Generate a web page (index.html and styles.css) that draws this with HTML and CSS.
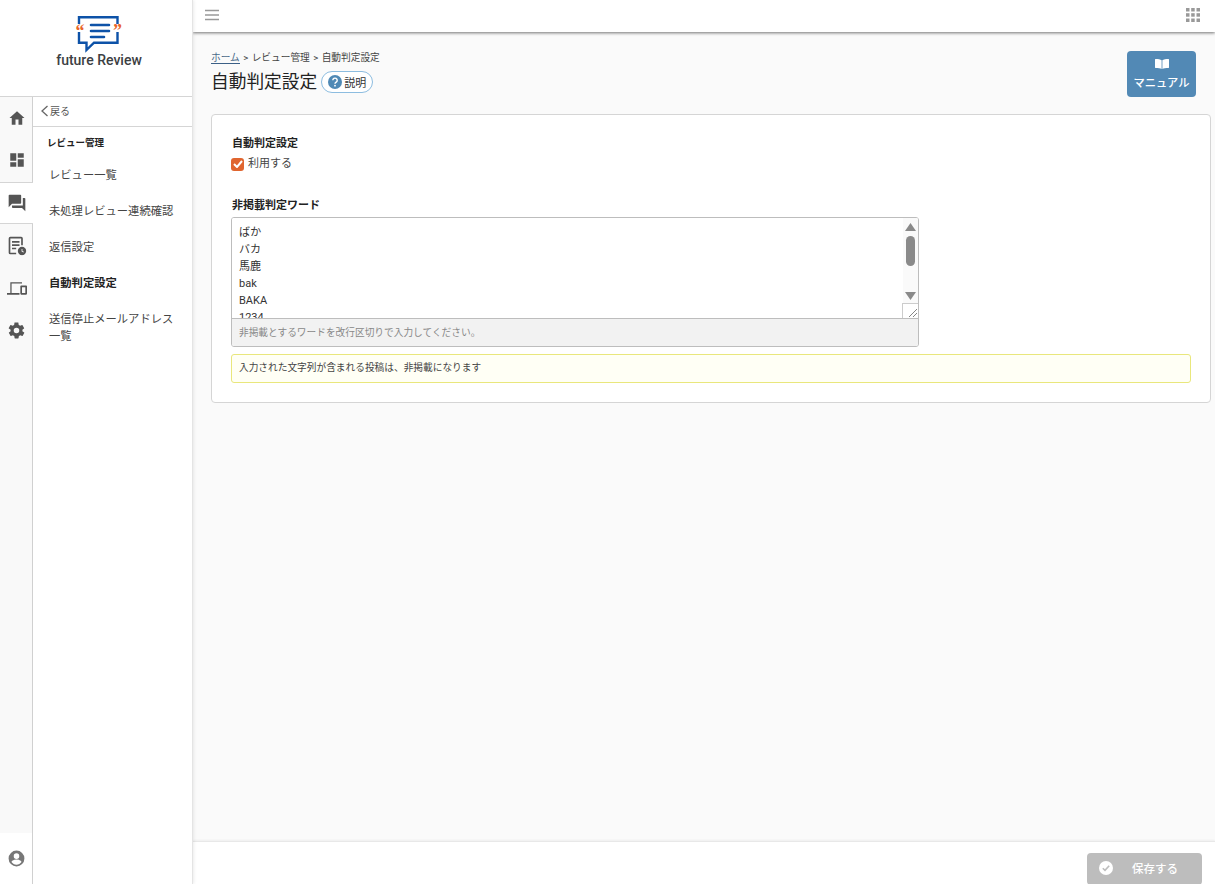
FILE: index.html
```html
<!DOCTYPE html>
<html lang="ja">
<head>
    <meta charset="UTF-8">
    <meta name="viewport" content="width=device-width, initial-scale=1.0">
    <title>自動判定設定</title>
    <link rel="stylesheet" href="styles.css">
</head>
<body>
    <div class="layout">
        <aside class="sidebar">
            <div class="logo">
                <svg class="logo-mark" width="46" height="38" viewBox="0 0 46 38">
                    <path d="M3 9V2.300H41.500V9M41.500 17V27.700H18L10.500 35V27.700H3V17" fill="none" stroke="#0d52a8" stroke-width="2.400"/>
                    <path d="M15 10h18M15 16h18M15 22h13" fill="none" stroke="#0d52a8" stroke-width="2.600" stroke-linecap="round"/>
                    <text x="-0.500" y="22" class="logo-quote">“</text>
                    <text x="37" y="22" class="logo-quote">”</text>
                </svg>
                <div class="logo-text">future Review</div>
            </div>
            <div class="side-body">
                <nav class="rail">
                    <a class="rail-item">
                        <svg width="18" height="18" viewBox="0 0 24 24"><path d="M10 21v-7h4v7h5v-9h3L12 3 2 12h3v9z"/></svg>
                    </a>
                    <a class="rail-item">
                        <svg width="18" height="18" viewBox="0 0 24 24"><path d="M3 13h8V3H3zm0 8h8v-6H3zm10 0h8V11h-8zm0-18v6h8V3z"/></svg>
                    </a>
                    <a class="rail-item active">
                        <svg width="20" height="20" viewBox="0 0 24 24"><path d="M21 6h-2v9H6v2c0 .6.4 1 1 1h11l4 4V7c0-.6-.4-1-1-1zm-4 6V3c0-.6-.4-1-1-1H3c-.6 0-1 .4-1 1v14l4-4h10c.6 0 1-.4 1-1z"/></svg>
                    </a>
                    <a class="rail-item">
                        <svg width="20" height="20" viewBox="0 0 24 24"><path d="M4 1h13a2 2 0 0 1 2 2v8h-2V3H4v17h7v2H4a2 2 0 0 1-2-2V3a2 2 0 0 1 2-2z"/><path d="M6 6h9v2H6zm0 4h9v2H6zm0 4h5v2H6z"/><circle cx="18" cy="18" r="5"/><path d="M17.500 15.500h1v2.500l1.800 1-.5.8-2.300-1.300z" fill="#f9f9f9"/></svg>
                    </a>
                    <a class="rail-item">
                        <svg width="20" height="20" viewBox="0 0 24 24"><path d="M4 5h14v1.500H5.500V18H15v2H0v-2h4z"/><path d="M17 9h6a1 1 0 0 1 1 1v9a1 1 0 0 1-1 1h-6a1 1 0 0 1-1-1v-9a1 1 0 0 1 1-1zm1 2v7h4v-7z"/></svg>
                    </a>
                    <a class="rail-item">
                        <svg width="19" height="19" viewBox="0 0 24 24"><path d="M19.400 13c.1-.3.100-.7.100-1s0-.7-.1-1l2.100-1.600c.2-.2.200-.4.100-.6l-2-3.500c-.1-.2-.4-.3-.6-.2l-2.500 1c-.5-.4-1.100-.7-1.700-1l-.4-2.600c0-.3-.2-.5-.5-.5h-4c-.2 0-.5.200-.5.500l-.4 2.600c-.6.200-1.100.6-1.700 1l-2.500-1c-.2-.1-.5 0-.6.200l-2 3.500c-.1.200-.1.500.1.600L4.600 11c0 .3-.1.700-.1 1s0 .7.100 1l-2.100 1.600c-.2.200-.2.400-.1.600l2 3.500c.1.200.4.300.6.200l2.500-1c.5.400 1.100.7 1.700 1l.4 2.600c0 .3.200.5.500.5h4c.2 0 .5-.2.5-.5l.4-2.600c.6-.2 1.200-.6 1.700-1l2.500 1c.2.100.5 0 .6-.2l2-3.500c.1-.2.100-.5-.1-.6zM12 15.500a3.500 3.500 0 1 1 0-7 3.500 3.500 0 0 1 0 7z"/></svg>
                    </a>
                    <div class="rail-user">
                        <svg width="19" height="19" viewBox="0 0 24 24"><path d="M12 2a10 10 0 1 0 0 20 10 10 0 0 0 0-20zm0 3.500a3.500 3.500 0 1 1 0 7 3.500 3.500 0 0 1 0-7zm0 14.300c-2.600 0-4.900-1.300-6.300-3.300.1-2 4.200-3.100 6.300-3.100s6.200 1.100 6.300 3.100c-1.400 2-3.700 3.300-6.300 3.300z"/></svg>
                    </div>
                </nav>
                <div class="submenu">
                    <a class="back">
                        <svg width="9" height="12" viewBox="0 0 9 12"><path d="M7.500 1 2 6l5.500 5" fill="none" stroke="#666" stroke-width="1.300"/></svg>
                        戻る
                    </a>
                    <div class="sub-title">レビュー管理</div>
                    <a class="sub-item">レビュー一覧</a>
                    <a class="sub-item">未処理レビュー連続確認</a>
                    <a class="sub-item">返信設定</a>
                    <a class="sub-item current">自動判定設定</a>
                    <a class="sub-item">送信停止メールアドレス一覧</a>
                </div>
            </div>
        </aside>

        <div class="main">
            <header class="topbar">
                <svg width="14" height="12" viewBox="0 0 14 12"><path d="M0 1.500h14M0 6h14M0 10.500h14" stroke="#999" stroke-width="1.500"/></svg>
                <svg width="14" height="14" viewBox="0 0 14 14" fill="#999">
                    <rect x="0" y="0" width="3.500" height="3.500"/><rect x="5.200" y="0" width="3.500" height="3.500"/><rect x="10.500" y="0" width="3.500" height="3.500"/>
                    <rect x="0" y="5.200" width="3.500" height="3.500"/><rect x="5.200" y="5.200" width="3.500" height="3.500"/><rect x="10.500" y="5.200" width="3.500" height="3.500"/>
                    <rect x="0" y="10.500" width="3.500" height="3.500"/><rect x="5.200" y="10.500" width="3.500" height="3.500"/><rect x="10.500" y="10.500" width="3.500" height="3.500"/>
                </svg>
            </header>

            <main class="content">
                <div class="page-head">
                    <div>
                        <div class="breadcrumb"><a>ホーム</a> &gt; レビュー管理 &gt; 自動判定設定</div>
                        <div class="title-row">
                            <h1>自動判定設定</h1>
                            <span class="help-pill">
                                <svg width="14" height="14" viewBox="0 0 14 14"><circle cx="7" cy="7" r="7" fill="#4f89b5"/><path d="M4.800 5.300a2.200 2.200 0 1 1 3.400 1.900c-.8.500-1.200.8-1.200 1.500" fill="none" stroke="#fff" stroke-width="1.400"/><circle cx="7" cy="10.700" r=".9" fill="#fff"/></svg>
                                説明
                            </span>
                        </div>
                    </div>
                    <a class="manual-btn">
                        <svg width="14" height="10" viewBox="0 0 14 10" fill="#fff"><path d="M6.600 1.200C5.400.4 3.200 0 .5 0 .2 0 0 .2 0 .5v8c0 .3.200.5.500.5 2.700 0 4.900.3 6.100 1zM7.400 1.200C8.600.4 10.800 0 13.500 0c.3 0 .5.200.5.500v8c0 .3-.2.500-.5.500-2.700 0-4.900.3-6.100 1z"/></svg>
                        マニュアル
                    </a>
                </div>

                <section class="card">
                    <div class="field-label">自動判定設定</div>
                    <label class="check">
                        <span class="check-box">
                            <svg width="10" height="8" viewBox="0 0 10 8"><path d="M1 4l3 3 5-6" fill="none" stroke="#fff" stroke-width="2"/></svg>
                        </span>
                        利用する
                    </label>

                    <div class="field-label words-label">非掲載判定ワード</div>
                    <div class="words-box">
                        <div class="words-input">
                            <textarea class="words" readonly>ばか
バカ
馬鹿
bak
BAKA
1234</textarea>
                            <div class="scrollbar">
                                <svg width="11" height="8" viewBox="0 0 11 8"><path d="M5.500 0 11 8H0z" fill="#8a8a8a"/></svg>
                                <span class="thumb"></span>
                                <svg class="arrow-down" width="11" height="8" viewBox="0 0 11 8"><path d="M0 0h11L5.500 8z" fill="#8a8a8a"/></svg>
                            </div>
                            <span class="resizer">
                                <svg width="8" height="8" viewBox="0 0 8 8"><path d="M0 8l8-8M4 8l4-4" stroke="#666" stroke-width=".8"/></svg>
                            </span>
                        </div>
                        <div class="words-hint">非掲載とするワードを改行区切りで入力してください。</div>
                    </div>
                    <div class="notice">入力された文字列が含まれる投稿は、非掲載になります</div>
                </section>
            </main>

            <footer class="footer">
                <button class="save-btn" disabled>
                    <svg width="14" height="14" viewBox="0 0 14 14"><circle cx="7" cy="7" r="7" fill="#fff"/><path d="M3.800 7.200 6 9.400l4.200-4.600" fill="none" stroke="#bdbdbd" stroke-width="1.600"/></svg>
                    <span>保存する</span>
                </button>
            </footer>
        </div>
    </div>
</body>
</html>
```

FILE: styles.css
```css
* {
    box-sizing: border-box;
}
html, body {
    height: 100%;
    margin: 0;
}
body {
    font-family: Roboto, "Noto Sans CJK JP", sans-serif;
    font-size: 12px;
    color: #333;
    background-color: #fafafa;
    overflow: hidden;
}
.layout {
    display: flex;
    height: 884px;
}

/* sidebar */
.sidebar {
    width: 193px;
    flex: none;
    display: flex;
    flex-direction: column;
    background-color: #fff;
    border-right: 1px solid #e4e4e4;
    box-shadow: 1px 0 3px rgba(0,0,0,0.08);
    z-index: 2;
}
.logo {
    height: 97px;
    flex: none;
    border-bottom: 1px solid #d5d5d5;
    display: flex;
    flex-direction: column;
    align-items: center;
    padding: 15px 0 0 6px;
}
.logo-mark {
    display: block;
    overflow: visible;
}
.logo-quote {
    font-family: "Liberation Serif", serif;
    font-size: 18px;
    font-weight: bold;
    fill: #e8652a;
}
.logo-text {
    font-size: 14px;
    font-weight: 500;
    color: #3c4043;
    line-height: 16px;
    margin-top: -1px;
}
.side-body {
    flex: 1;
    display: flex;
    min-height: 0;
}
.rail {
    width: 33px;
    flex: none;
    display: flex;
    flex-direction: column;
    background-color: #f9f9f9;
    border-right: 1px solid #d0d0d0;
}
.rail-item {
    height: 42px;
    display: flex;
    align-items: center;
    justify-content: center;
    padding-left: 1px;
    fill: #555;
}
.rail-item.active {
    width: 33px;
    height: 42px;
    margin: 1px 0;
    background-color: #fff;
    border-top: 1px solid #d5d5d5;
    border-bottom: 1px solid #d5d5d5;
}
.rail-user {
    margin-top: auto;
    height: 51px;
    background-color: #fff;
    display: flex;
    align-items: center;
    justify-content: center;
    fill: #777;
}
.submenu {
    flex: 1;
    min-width: 0;
}
.back {
    height: 30px;
    display: flex;
    align-items: center;
    gap: 1px;
    padding: 0 0 2px 7px;
    font-size: 10px;
    color: #555;
    border-bottom: 1px solid #d5d5d5;
}
.sub-title {
    font-size: 9.500px;
    font-weight: 700;
    color: #222;
    line-height: 14px;
    padding: 9px 0 0 14px;
    height: 31px;
}
.sub-item {
    display: block;
    font-size: 11.300px;
    line-height: 17px;
    color: #444;
    padding: 9px 16px 10px 16px;
}
.sub-item.current {
    font-weight: 700;
    color: #222;
}

/* main area */
.main {
    flex: 1;
    min-width: 0;
    display: flex;
    flex-direction: column;
}
.topbar {
    height: 32px;
    flex: none;
    background-color: #fff;
    display: flex;
    align-items: center;
    justify-content: space-between;
    padding: 0 15px 2px 12px;
    box-shadow: 0 1px 3px rgba(0,0,0,0.55);
    position: relative;
}
.content {
    flex: 1;
    min-height: 0;
    padding: 19px 4px 0 18px;
}
.page-head {
    display: flex;
    justify-content: space-between;
    height: 63px;
    padding-right: 15px;
}
.breadcrumb {
    font-size: 9.700px;
    word-spacing: 1px;
    line-height: 14px;
    color: #444;
}
.breadcrumb a {
    color: #4a6a8a;
    border-bottom: 1px solid #3b5f86;
}
.title-row {
    display: flex;
    align-items: center;
    gap: 4px;
    margin-top: 4px;
}
h1 {
    margin: 0;
    font-size: 17.700px;
    font-weight: 400;
    line-height: 26px;
    color: #222;
}
.help-pill {
    display: inline-flex;
    align-items: center;
    gap: 2px;
    height: 22px;
    padding: 0 6px;
    border: 1px solid #8dbde0;
    border-radius: 11px;
    background-color: #fff;
    font-size: 11px;
    color: #333;
}
.manual-btn {
    width: 69px;
    height: 46px;
    border-radius: 4px;
    background-color: #5289b5;
    color: #fff;
    font-size: 11.300px;
    font-weight: 500;
    display: flex;
    flex-direction: column;
    align-items: center;
    justify-content: center;
    gap: 5px;
}
.card {
    height: 289px;
    background-color: #fff;
    border: 1px solid #d5d5d5;
    border-radius: 4px;
    padding: 21px 19px 0 19px;
}
.field-label {
    font-size: 11px;
    font-weight: 700;
    line-height: 16px;
    color: #222;
    margin-left: 1px;
}
.check {
    display: flex;
    align-items: center;
    gap: 4px;
    margin-top: 4px;
    font-size: 11px;
    line-height: 16px;
    color: #444;
}
.check-box {
    width: 13px;
    height: 13px;
    border-radius: 3px;
    background-color: #e0652f;
    display: flex;
    align-items: center;
    justify-content: center;
}
.words-label {
    margin-top: 26px;
}
.words-box {
    width: 688px;
    margin-top: 3px;
    border: 1px solid #bdbdbd;
    border-radius: 3px;
    overflow: hidden;
}
.words-input {
    position: relative;
    height: 100px;
}
.words {
    display: block;
    width: 100%;
    height: 100%;
    border: 0;
    outline: 0;
    resize: none;
    overflow: hidden;
    padding: 5.500px 7px;
    font-family: Roboto, "Noto Sans CJK JP", sans-serif;
    font-size: 11px;
    line-height: 17px;
    color: #333;
    background-color: #fff;
}
.scrollbar {
    position: absolute;
    top: 0;
    right: 0;
    width: 15px;
    height: 85px;
    background-color: #fafafa;
    display: flex;
    flex-direction: column;
    align-items: center;
    padding: 5px 0 3px;
}
.thumb {
    display: block;
    width: 9px;
    height: 30px;
    margin-top: 5px;
    border-radius: 5px;
    background-color: #8a8a8a;
}
.arrow-down {
    margin-top: auto;
}
.resizer {
    position: absolute;
    right: 0;
    bottom: 0;
    width: 16px;
    height: 15px;
    border-left: 1px solid #ccc;
    border-top: 1px solid #ccc;
    background-color: #fff;
    display: flex;
    align-items: flex-end;
    justify-content: flex-end;
    padding: 0 1px 1px 0;
}
.words-hint {
    height: 28px;
    border-top: 1px solid #bdbdbd;
    background-color: #f2f2f2;
    padding: 0 7px;
    font-size: 9.700px;
    line-height: 27px;
    color: #888;
}
.notice {
    height: 29px;
    margin-top: 7px;
    border: 1px solid #e9e77c;
    border-radius: 3px;
    background-color: #fffff5;
    padding: 0 7px;
    font-size: 9.700px;
    line-height: 26px;
    color: #444;
}
.footer {
    height: 43px;
    flex: none;
    background-color: #fff;
    border-top: 1px solid #e8e8e8;
    box-shadow: 0 -1px 2px rgba(0,0,0,0.05);
    display: flex;
    justify-content: flex-end;
    padding: 11px 13px 0 0;
}
.save-btn {
    width: 115px;
    height: 32px;
    border: 0;
    border-radius: 4px;
    background-color: #bdbdbd;
    color: #fff;
    font-family: Roboto, "Noto Sans CJK JP", sans-serif;
    font-size: 11.500px;
    font-weight: 500;
    display: flex;
    align-items: center;
    padding: 0 0 2px 12px;
}
.save-btn span {
    margin-left: 19px;
}
```
